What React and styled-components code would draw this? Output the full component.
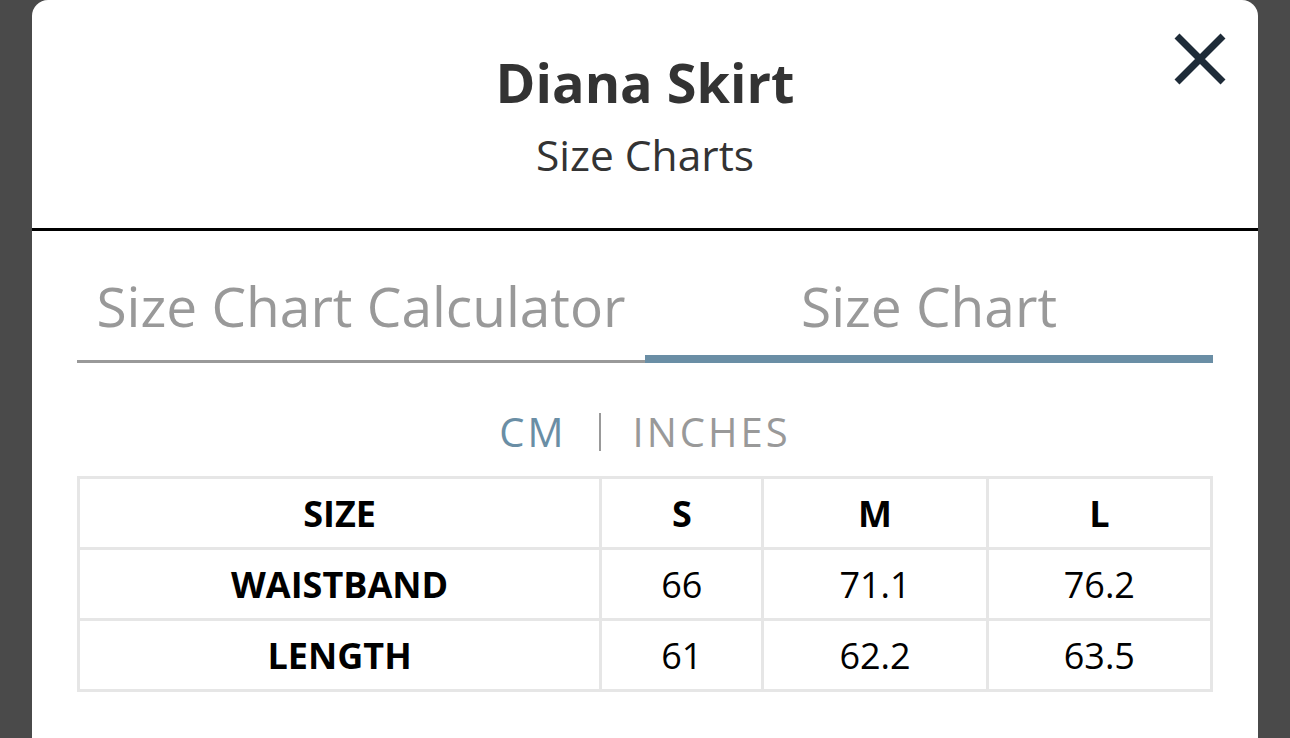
import React, { useState } from "react";
import styled, { createGlobalStyle } from "styled-components";

const GlobalStyle = createGlobalStyle`
  html, body {
    margin: 0;
    padding: 0;
    background: #4a4a4a;
    font-family: "Open Sans", "Noto Sans", sans-serif;
    overflow: hidden;
  }
`;

const rows = [
  { label: "WAISTBAND", values: ["66", "71.1", "76.2"] },
  { label: "LENGTH", values: ["61", "62.2", "63.5"] },
];

function App() {
  const [tab, setTab] = useState("chart");
  const [unit, setUnit] = useState("cm");

  return (
    <>
      <GlobalStyle />
      <Page>
        <Modal>
          <Header>
            <Title>Diana Skirt</Title>
            <Subtitle>Size Charts</Subtitle>
            <CloseButton aria-label="Close">
              <svg width="54" height="52" viewBox="0 0 54 52">
                <path
                  d="M4 3 L50 49 M50 3 L4 49"
                  stroke="#1e2b38"
                  strokeWidth="7"
                  fill="none"
                />
              </svg>
            </CloseButton>
          </Header>

          <Body>
            <Tabs>
              <Tab active={tab === "calc"} onClick={() => setTab("calc")}>
                Size Chart Calculator
              </Tab>
              <Tab active={tab === "chart"} onClick={() => setTab("chart")}>
                Size Chart
              </Tab>
            </Tabs>

            <Units>
              <Unit active={unit === "cm"} onClick={() => setUnit("cm")}>
                CM
              </Unit>
              <Sep />
              <Unit active={unit === "in"} onClick={() => setUnit("in")}>
                INCHES
              </Unit>
            </Units>

            <Table>
              <colgroup>
                <col style={{ width: "46.1%" }} />
                <col style={{ width: "14.3%" }} />
                <col style={{ width: "19.8%" }} />
                <col style={{ width: "19.8%" }} />
              </colgroup>
              <tbody>
                <tr>
                  <Cell bold>SIZE</Cell>
                  <Cell bold>S</Cell>
                  <Cell bold>M</Cell>
                  <Cell bold>L</Cell>
                </tr>
                {rows.map((r) => (
                  <tr key={r.label}>
                    <Cell bold>{r.label}</Cell>
                    {r.values.map((v, i) => (
                      <Cell key={i}>{v}</Cell>
                    ))}
                  </tr>
                ))}
              </tbody>
            </Table>
          </Body>
        </Modal>
      </Page>
    </>
  );
}

const Page = styled.div`
  height: 738px;
  padding: 0 32px;
  box-sizing: border-box;
`;

const Modal = styled.div`
  background: #fff;
  border-radius: 16px 16px 0 0;
  height: 780px;
`;

const Header = styled.div`
  position: relative;
  text-align: center;
  padding-top: 47px;
  height: 231px;
  box-sizing: border-box;
  border-bottom: 3px solid #000;
  color: #333;
`;

const Title = styled.h1`
  margin: 0;
  font-size: 54px;
  font-weight: 700;
  line-height: 70px;
`;

const Subtitle = styled.div`
  font-size: 42.5px;
  line-height: 56px;
  margin-top: 10px;
`;

const CloseButton = styled.button`
  position: absolute;
  top: 33px;
  right: 31px;
  border: 0;
  padding: 0;
  background: none;
  cursor: pointer;
  display: flex;
`;

const Body = styled.div`
  padding: 0 45px;
`;

const Tabs = styled.div`
  display: grid;
  grid-template-columns: 1fr 1fr;
  align-items: end;
  padding-top: 38px;
`;

const Tab = styled.div`
  text-align: center;
  font-size: 55px;
  line-height: 74px;
  color: #999;
  cursor: pointer;
  padding-bottom: ${(p) => (p.active ? "12px" : "17px")};
  border-bottom: ${(p) => (p.active ? "8px solid #6a8ea5" : "3px solid #999")};
`;

const Units = styled.div`
  display: flex;
  justify-content: center;
  align-items: center;
  gap: 32px;
  margin-top: 44px;
  margin-bottom: 19px;
  font-size: 40px;
  line-height: 50px;
  letter-spacing: 3px;
`;

const Unit = styled.span`
  color: ${(p) => (p.active ? "#6a8ea5" : "#999")};
  cursor: pointer;
`;

const Sep = styled.span`
  width: 2px;
  height: 38px;
  background: #999;
`;

const Table = styled.table`
  width: 100%;
  border-collapse: collapse;
  table-layout: fixed;
  border: 3px solid #e6e6e6;
`;

const Cell = styled.td`
  border: 3px solid #e6e6e6;
  height: 68px;
  text-align: center;
  font-size: 36px;
  font-weight: ${(p) => (p.bold ? 700 : 400)};
  color: #000;
  padding: 0;
`;

export default App;
